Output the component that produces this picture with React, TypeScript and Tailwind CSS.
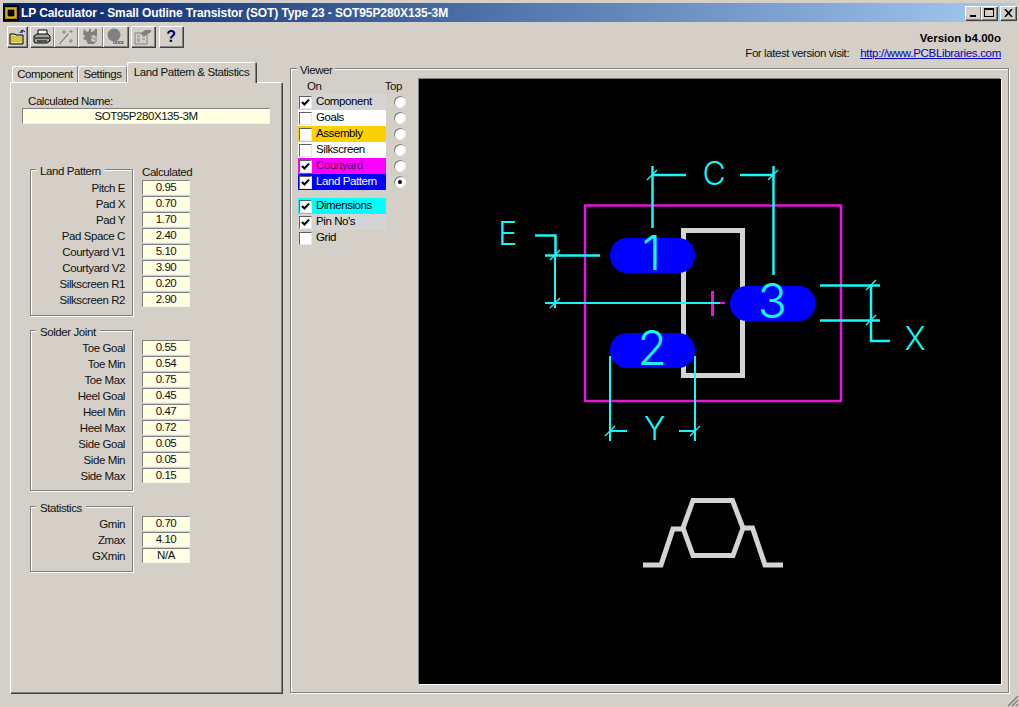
import React from "react";

const raised = "shadow-[inset_1px_1px_0_#ffffff,inset_-1px_-1px_0_#808080,1px_1px_0_#404040]";
const tabEdge = "shadow-[inset_1px_1px_0_#ffffff,inset_-1px_0_0_#808080,1px_0_0_#404040]";
const sunken = "border border-t-[#808080] border-l-[#808080] border-r-[#f4f2ec] border-b-[#f4f2ec]";
const etched = "border border-[#808080] shadow-[inset_1px_1px_0_#ffffff,1px_1px_0_#ffffff]";

const landPattern = [
    ["Pitch E", "0.95"],
    ["Pad X", "0.70"],
    ["Pad Y", "1.70"],
    ["Pad Space C", "2.40"],
    ["Courtyard V1", "5.10"],
    ["Courtyard V2", "3.90"],
    ["Silkscreen R1", "0.20"],
    ["Silkscreen R2", "2.90"],
];

const solderJoint = [
    ["Toe Goal", "0.55"],
    ["Toe Min", "0.54"],
    ["Toe Max", "0.75"],
    ["Heel Goal", "0.45"],
    ["Heel Min", "0.47"],
    ["Heel Max", "0.72"],
    ["Side Goal", "0.05"],
    ["Side Min", "0.05"],
    ["Side Max", "0.15"],
];

const statistics = [
    ["Gmin", "0.70"],
    ["Zmax", "4.10"],
    ["GXmin", "N/A"],
];

const layers = [
    { name: "Component", on: true, row: "bg-[#d4d4d4] text-black" },
    { name: "Goals", on: false, row: "bg-white text-black" },
    { name: "Assembly", on: false, row: "bg-[#ffd000] text-black" },
    { name: "Silkscreen", on: false, row: "bg-white text-black" },
    { name: "Courtyard", on: true, row: "bg-[#ff00ff] text-[#50004f]" },
    { name: "Land Pattern", on: true, row: "bg-[#0000ff] text-white" },
];

const extras = [
    { name: "Dimensions", on: true, row: "bg-[#00ffff] text-black" },
    { name: "Pin No's", on: true, row: "bg-[#d4d4d4] text-black" },
    { name: "Grid", on: false, row: "text-black" },
];

function ToolIcon({ kind }: { kind: string }) {
    if (kind === "open") {
        return (
            <svg width="17" height="16" viewBox="0 0 17 16">
                <path d="M1 5h5l1 1h7v9H1z" fill="#e8e070" stroke="#000" />
                <path d="M2 8h11M2 10h11M2 12h11" stroke="#b0a840" />
                <path d="M11 4l2-3 3 2M13 1v3" fill="none" stroke="#000080" />
            </svg>
        );
    }
    if (kind === "print") {
        return (
            <svg width="18" height="16" viewBox="0 0 18 16">
                <path d="M5 1h9v5H5z" fill="#fff" stroke="#000" />
                <path d="M1 7l3-2h11l2 2v5l-3 2H2l-1-1z" fill="#a0a0a0" stroke="#000" />
                <path d="M2 9h14M4 12h10" stroke="#000" />
            </svg>
        );
    }
    if (kind === "wand") {
        return (
            <svg width="18" height="16" viewBox="0 0 18 16">
                <path d="M3 15L12 5" stroke="#808080" strokeWidth="2" />
                <path d="M7 1v4M5 3h4M14 1v3M12.500 2.500h3M14 10v4M12 12h4" stroke="#808080" />
                <path d="M4 15L13 5" stroke="#ffffff" />
            </svg>
        );
    }
    if (kind === "gear") {
        return (
            <svg width="18" height="17" viewBox="0 0 18 17">
                <path d="M2 1l3 3 2-1v-2h2v3l3-1 1-2h2v7h-2l1 3-2 5H6l-2-4-3-1 2-3-2-2z" fill="#808080" />
                <path d="M9 7h5v7H9z" fill="#d4d0c8" stroke="#808080" />
                <path d="M10 9l3 3" stroke="#808080" />
            </svg>
        );
    }
    if (kind === "ball") {
        return (
            <svg width="20" height="17" viewBox="0 0 20 17">
                <circle cx="8" cy="7" r="6.500" fill="#808080" />
                <path d="M7 13h11v3H7z" fill="#808080" />
                <path d="M8 14.500h1M11 14.500h1M14 14.500h1M17 14.500h1" stroke="#d4d0c8" />
            </svg>
        );
    }
    return (
        <svg width="18" height="16" viewBox="0 0 18 16">
            <path d="M1 4h12v11H1z" fill="#d4d0c8" stroke="#808080" />
            <path d="M3 7h3M3 10h3M3 12h3M8 7h3M8 10h3" stroke="#808080" />
            <path d="M6 5l5-4h6v2l-6 4z" fill="#808080" />
        </svg>
    );
}

function ToolButton({ children, className }: { children: React.ReactNode; className: string }) {
    return <div className={`flex h-[21px] items-center justify-center ${raised} ${className}`}>{children}</div>;
}

function CapButton({ children }: { children: React.ReactNode }) {
    return <div className={`flex h-[14px] w-[16px] items-center justify-center bg-[#d4d0c8] ${raised}`}>{children}</div>;
}

function Fieldset({ title, rows, className }: { title: string; rows: string[][]; className: string }) {
    return (
        <div className={`flex ${className}`}>
            <div className={`relative w-[103px] pr-[7px] ${etched}`}>
                <span className="absolute top-[-6px] left-[5px] h-[14px] bg-[#d4d0c8] px-[4px] leading-[14px]">{title}</span>
                {rows.map(([label]) => (
                    <div key={label} className="h-4 text-right leading-4">{label}</div>
                ))}
            </div>
            <div className="ml-[9px] flex w-[48px] flex-col">
                {rows.map(([label, value]) => (
                    <div key={label} className={`mb-[1px] h-[15px] bg-[#ffffe1] text-center leading-[13px] ${sunken}`}>{value}</div>
                ))}
            </div>
        </div>
    );
}

function CheckBox({ on }: { on: boolean }) {
    return (
        <div className="ml-[1px] flex h-[13px] w-[13px] shrink-0 items-center justify-center border border-t-[#606060] border-l-[#606060] border-r-[#e8e8e8] border-b-[#e8e8e8] bg-white">
            {on && (
                <svg width="9" height="9" viewBox="0 0 9 9">
                    <path d="M1 4l2.500 2.500L8 1.500" fill="none" stroke="#000" strokeWidth="2" />
                </svg>
            )}
        </div>
    );
}

function Radio({ on }: { on: boolean }) {
    return (
        <div className="flex h-3 w-3 items-center justify-center rounded-full bg-white shadow-[inset_1px_1px_0_#808080,inset_-1px_-1px_0_#e8e8e8]">
            {on && <div className="h-1 w-1 rounded-full bg-black" />}
        </div>
    );
}

function Tick({ x, y }: { x: number; y: number }) {
    return <path d={`M${x - 5} ${y + 5}L${x + 5} ${y - 5}`} stroke="#19f5f5" strokeWidth="1.500" />;
}

function Drawing() {
    const cyan = "#19f5f5";
    const letter = { fill: cyan, fontFamily: "Inter, 'Liberation Sans', sans-serif", fontWeight: 300 };
    return (
        <svg className="block h-full w-full bg-black" viewBox="419 79 582 605">
            {/* courtyard */}
            <rect x="585" y="205.500" width="256" height="195.500" fill="none" stroke="#e814d8" strokeWidth="2.500" />
            {/* silkscreen body */}
            <path d="M695 230.500H742.500V375.500H683.500V230.500H695" fill="none" stroke="#d4d4d4" strokeWidth="5" />
            {/* pads */}
            <rect x="610" y="238" width="85" height="35" rx="17" fill="#0000ff" />
            <rect x="610" y="333" width="85" height="35" rx="17" fill="#0000ff" />
            <rect x="730" y="286" width="85.500" height="35" rx="17" fill="#0000ff" />
            {/* centre mark */}
            <path d="M712.500 291V316" stroke="#e814d8" strokeWidth="3" />
            <path d="M720 303H725" stroke="#e814d8" strokeWidth="2" />
            {/* dimension C */}
            <path d="M652.500 166V228M652 175H686M740 175H773M773.500 166V275" fill="none" stroke={cyan} strokeWidth="2.500" />
            <Tick x={652} y={175} />
            <Tick x={773} y={175} />
            {/* dimension E */}
            <path d="M535 235.500H555.500V256M545 255.500H600" fill="none" stroke={cyan} strokeWidth="2.500" />
            <path d="M555 255V308M545 303H720" fill="none" stroke={cyan} strokeWidth="2" />
            <Tick x={555} y={255} />
            <Tick x={555} y={303} />
            {/* dimension X */}
            <path d="M820 285.500H880M820 320.500H880M871 285V341H890" fill="none" stroke={cyan} strokeWidth="2.500" />
            <Tick x={871} y={285} />
            <Tick x={871} y={320} />
            {/* dimension Y */}
            <path d="M610 356V441M695 356V441M610 431H627M679 431H695" fill="none" stroke={cyan} strokeWidth="2" />
            <Tick x={610} y={431} />
            <Tick x={695} y={431} />
            {/* pad numbers and labels */}
            <text x="651.500" y="270" textAnchor="middle" fontSize="48" {...letter}>1</text>
            <text x="652" y="365" textAnchor="middle" fontSize="48" {...letter}>2</text>
            <text x="772" y="318" textAnchor="middle" fontSize="48" {...letter}>3</text>
            <text x="714" y="185" textAnchor="middle" fontSize="32" {...letter}>C</text>
            <text x="507.500" y="245" textAnchor="middle" fontSize="32" {...letter}>E</text>
            <text x="915" y="350" textAnchor="middle" fontSize="32" {...letter}>X</text>
            <text x="654.500" y="440" textAnchor="middle" fontSize="32" {...letter}>Y</text>
            {/* side view */}
            <path
                d="M643 565H661L673 529H683M693 500.500H732.500L743 528L733 555.500H693L683 528zM743 528H752.500L765 565H783"
                fill="none"
                stroke="#d4d4d4"
                strokeWidth="5"
            />
        </svg>
    );
}

export default function App() {
    return (
        <div className="relative h-[707px] w-[1019px] overflow-hidden bg-[#d4d0c8] text-[11.500px] tracking-[-0.42px] text-[#111] [font-family:'Liberation_Sans',sans-serif]">
            {/* title bar */}
            <div className="mx-[3px] mt-[3px] flex h-[19px] items-center bg-gradient-to-r from-[#0a246a] to-[#a6caf0]">
                <svg width="16" height="16" viewBox="0 0 16 16" className="shrink-0">
                    <rect width="16" height="16" fill="#000" />
                    <rect x="2" y="2" width="12" height="12" fill="#c08000" />
                    <rect x="4" y="4" width="8" height="8" fill="#000" stroke="#ffe040" />
                </svg>
                <span className="ml-[2px] text-[12px] font-bold tracking-[-0.1px] whitespace-nowrap text-white">
                    LP Calculator - Small Outline Transistor (SOT) Type 23 - SOT95P280X135-3M
                </span>
                <div className="ml-auto flex items-center">
                    <CapButton><div className="mt-[7px] h-[2px] w-[6px] bg-black" /></CapButton>
                    <CapButton><div className="h-[9px] w-[10px] border border-t-2 border-black" /></CapButton>
                    <div className="w-[3px]" />
                    <CapButton>
                        <svg width="9" height="8" viewBox="0 0 9 8">
                            <path d="M1 0l7 8M8 0L1 8" stroke="#000" strokeWidth="1.500" />
                        </svg>
                    </CapButton>
                </div>
            </div>

            {/* toolbar and version */}
            <div className="flex h-[40px] items-start justify-between pr-[18px]">
                <div className="mt-[4px] ml-[7px] flex">
                    <ToolButton className="w-[20px]"><ToolIcon kind="open" /></ToolButton>
                    <div className="ml-[3px] flex">
                        <ToolButton className="w-[24px]"><ToolIcon kind="print" /></ToolButton>
                        <ToolButton className="w-[24px]"><ToolIcon kind="wand" /></ToolButton>
                        <ToolButton className="w-[25px]"><ToolIcon kind="gear" /></ToolButton>
                        <ToolButton className="w-[25px]"><ToolIcon kind="ball" /></ToolButton>
                    </div>
                    <ToolButton className="ml-[3px] w-[24px]"><ToolIcon kind="sheet" /></ToolButton>
                    <ToolButton className="ml-[4px] w-[24px]">
                        <span className="text-[16px] leading-none font-bold text-[#000080]">?</span>
                    </ToolButton>
                </div>
                <div className="mt-[9px] text-right">
                    <div className="h-[15px] text-[11.500px] leading-[15px] font-bold tracking-normal text-black">Version b4.00o</div>
                    <div className="flex h-[14px] leading-[14px]">
                        <span>For latest version visit:</span>
                        <span className="ml-[11px] tracking-[-0.3px] text-[#0000c0] underline">http://www.PCBLibraries.com</span>
                    </div>
                </div>
            </div>

            <div className="flex pl-[10px]">
                {/* tabs */}
                <div className="w-[272px]">
                    <div className="flex h-[20px] items-end pl-[2px]">
                        <div className={`h-[16px] w-[66px] rounded-t-[2px] text-center leading-[17px] ${tabEdge}`}>Component</div>
                        <div className={`h-[16px] w-[49px] rounded-t-[2px] text-center leading-[17px] ${tabEdge}`}>Settings</div>
                        <div className={`relative z-10 mb-[-1px] h-[21px] w-[129px] rounded-t-[2px] bg-[#d4d0c8] text-center leading-[20px] whitespace-nowrap ${tabEdge}`}>
                            Land Pattern &amp; Statistics
                        </div>
                    </div>
                    <div className={`h-[611px] pt-[13px] pl-[12px] ${raised}`}>
                        <div className="ml-[6px] h-[13px] leading-[13px]">Calculated Name:</div>
                        <div className={`h-[16px] w-[248px] bg-[#ffffe1] text-center leading-[15px] ${sunken}`}>SOT95P280X135-3M</div>
                        <div className="mt-[41px] ml-[120px] h-[14px] w-[50px] text-center leading-[14px] whitespace-nowrap">Calculated</div>
                        <div className="ml-[8px]">
                            <Fieldset title="Land Pattern" rows={landPattern} className="mt-[-10px] [&>div:first-child]:h-[147px] [&>div:first-child]:pt-[10px] [&>div:last-child]:pt-[11px]" />
                            <Fieldset title="Solder Joint" rows={solderJoint} className="mt-[14px] [&>div:first-child]:h-[161px] [&>div:first-child]:pt-[9px] [&>div:last-child]:pt-[10px]" />
                            <Fieldset title="Statistics" rows={statistics} className="mt-[15px] [&>div:first-child]:h-[66px] [&>div:first-child]:pt-[9px] [&>div:last-child]:pt-[10px]" />
                        </div>
                    </div>
                </div>

                {/* viewer */}
                <div className={`relative mt-[6px] ml-[8px] flex h-[625px] w-[719px] ${etched}`}>
                    <span className="absolute top-[-6px] left-[6px] h-[14px] bg-[#d4d0c8] px-[3px] leading-[14px]">Viewer</span>
                    <div className="w-[128px] shrink-0 pt-[10px] pl-[7px]">
                        <div className="flex h-[15px] w-[104px] justify-between leading-[15px]">
                            <span className="ml-[9px]">On</span>
                            <span>Top</span>
                        </div>
                        {layers.map((layer) => (
                            <div key={layer.name} className="flex h-4 items-center">
                                <div className={`flex h-4 w-[88px] items-center ${layer.row}`}>
                                    <CheckBox on={layer.on} />
                                    <span className="ml-[4px] whitespace-nowrap">{layer.name}</span>
                                </div>
                                <div className="ml-[8px]"><Radio on={layer.name === "Land Pattern"} /></div>
                            </div>
                        ))}
                        <div className="h-2" />
                        {extras.map((layer) => (
                            <div key={layer.name} className={`flex h-4 w-[88px] items-center ${layer.row}`}>
                                <CheckBox on={layer.on} />
                                <span className="ml-[4px] whitespace-nowrap">{layer.name}</span>
                            </div>
                        ))}
                    </div>
                    <div className="mt-[10px] h-[605px] w-[582px] shadow-[1px_1px_0_#ffffff,-1px_-1px_0_#808080]">
                        <Drawing />
                    </div>
                </div>
            </div>

            {/* resize grip */}
            <svg className="absolute right-0 bottom-0" width="12" height="12" viewBox="0 0 12 12">
                <path d="M1 11L11 1M5 11l6-6M9 11l2-2" stroke="#808080" strokeWidth="1.500" />
            </svg>
        </div>
    );
}
